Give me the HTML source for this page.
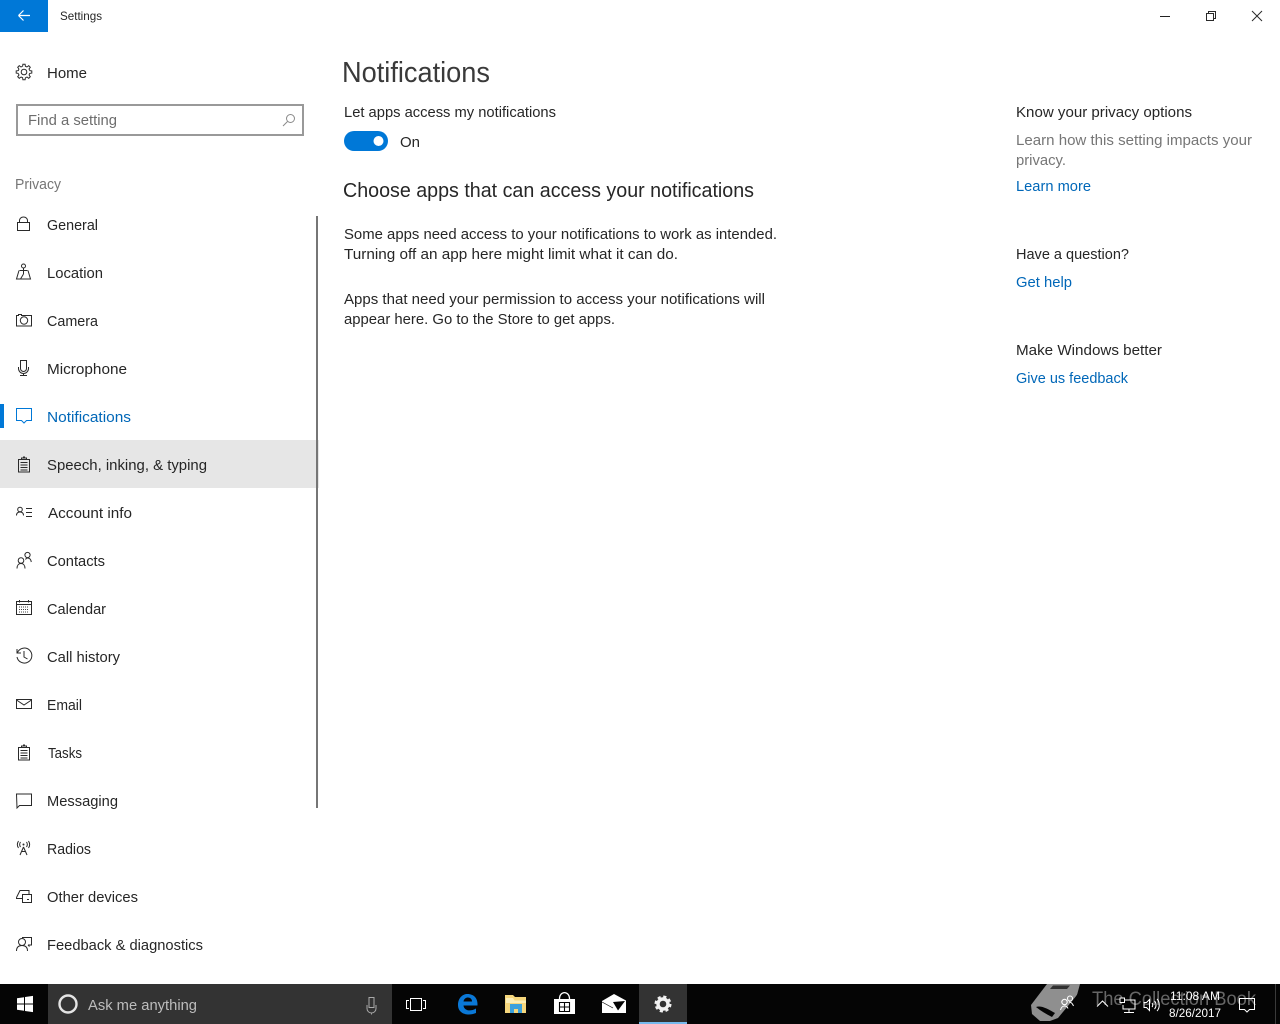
<!DOCTYPE html>
<html lang="en">
<head>
<meta charset="utf-8">
<title>Settings</title>
<style>
html,body{margin:0;padding:0;background:#fff;width:1280px;height:1024px;overflow:hidden}
svg{display:block}
text{font-family:"Liberation Sans",sans-serif;font-size:15px;fill:#262626}
.i{fill:none;stroke:#2a2a2a;stroke-width:1}
</style>
</head>
<body>
<svg width="1280" height="1024" viewBox="0 0 1280 1024" xmlns="http://www.w3.org/2000/svg">
<rect width="1280" height="1024" fill="#fff"/>
<!-- title bar -->
<rect width="48" height="32" fill="#0078d7"/>
<path d="M18.500 15.500H30M18.500 15.500l5-5M18.500 15.500l5 5" fill="none" stroke="#fff" stroke-width="1.200"/>
<text x="60" y="20" style="font-size:12px" textLength="42" lengthAdjust="spacingAndGlyphs">Settings</text>
<path d="M1160 16.500h10" stroke="#222" fill="none"/>
<path d="M1206.500 13.500h7v7h-7zM1208.500 13.500v-2h7v7h-2" class="i"/>
<path d="M1252 11l10 10M1262 11l-10 10" class="i"/>
<!-- sidebar top -->
<g transform="translate(24 72)" class="i" stroke-width="0.900">
<path d="M-1.400-5.700L-1.100-7.800H1.100L1.400-5.700L3.040-5.020"/>
<path transform="rotate(45)" d="M-1.400-5.700L-1.100-7.800H1.100L1.400-5.700L3.040-5.020"/>
<path transform="rotate(90)" d="M-1.400-5.700L-1.100-7.800H1.100L1.400-5.700L3.040-5.020"/>
<path transform="rotate(135)" d="M-1.400-5.700L-1.100-7.800H1.100L1.400-5.700L3.040-5.020"/>
<path transform="rotate(180)" d="M-1.400-5.700L-1.100-7.800H1.100L1.400-5.700L3.040-5.020"/>
<path transform="rotate(225)" d="M-1.400-5.700L-1.100-7.800H1.100L1.400-5.700L3.040-5.020"/>
<path transform="rotate(270)" d="M-1.400-5.700L-1.100-7.800H1.100L1.400-5.700L3.040-5.020"/>
<path transform="rotate(315)" d="M-1.400-5.700L-1.100-7.800H1.100L1.400-5.700L3.040-5.020"/>
<circle r="2.800"/>
</g>
<text x="47" y="78" textLength="40" lengthAdjust="spacingAndGlyphs">Home</text>
<rect x="17" y="105" width="286" height="30" fill="#fff" stroke="#999" stroke-width="2"/>
<text x="28" y="125" style="fill:#6d6d6d" textLength="89" lengthAdjust="spacingAndGlyphs">Find a setting</text>
<circle cx="290.500" cy="118.500" r="4" fill="none" stroke="#8a8a8a"/>
<path d="M287.500 121.500l-4.500 4.500" stroke="#8a8a8a" fill="none"/>
<text x="15" y="189" style="fill:#767676" textLength="46" lengthAdjust="spacingAndGlyphs">Privacy</text>
<!-- selection, scrollbar -->
<rect x="0" y="440" width="319" height="48" fill="#e6e6e6"/>
<rect x="316" y="216" width="2" height="592" fill="#767676"/>
<rect x="0" y="404" width="4" height="24" fill="#0078d7"/>
<!-- nav -->
<text x="47" y="230" textLength="51" lengthAdjust="spacingAndGlyphs">General</text>
<text x="47" y="278" textLength="56" lengthAdjust="spacingAndGlyphs">Location</text>
<text x="47" y="326" textLength="51" lengthAdjust="spacingAndGlyphs">Camera</text>
<text x="47" y="374" textLength="80" lengthAdjust="spacingAndGlyphs">Microphone</text>
<text x="47" y="422" style="fill:#0067b8" textLength="84" lengthAdjust="spacingAndGlyphs">Notifications</text>
<text x="47" y="470" textLength="160" lengthAdjust="spacingAndGlyphs">Speech, inking, &amp; typing</text>
<text x="48" y="518" textLength="84" lengthAdjust="spacingAndGlyphs">Account info</text>
<text x="47" y="566" textLength="58" lengthAdjust="spacingAndGlyphs">Contacts</text>
<text x="47" y="614" textLength="59" lengthAdjust="spacingAndGlyphs">Calendar</text>
<text x="47" y="662" textLength="73" lengthAdjust="spacingAndGlyphs">Call history</text>
<text x="47" y="710" textLength="35" lengthAdjust="spacingAndGlyphs">Email</text>
<text x="48" y="758" textLength="34" lengthAdjust="spacingAndGlyphs">Tasks</text>
<text x="47" y="806" textLength="71" lengthAdjust="spacingAndGlyphs">Messaging</text>
<text x="47" y="854" textLength="44" lengthAdjust="spacingAndGlyphs">Radios</text>
<text x="47" y="902" textLength="91" lengthAdjust="spacingAndGlyphs">Other devices</text>
<text x="47" y="950" textLength="156" lengthAdjust="spacingAndGlyphs">Feedback &amp; diagnostics</text>
<!-- nav icons -->
<path d="M17.500 222.500h12v8h-12zM19.500 222.500v-2a4 3.500 0 0 1 8 0v2" class="i"/>
<circle cx="23.500" cy="266" r="2" class="i"/>
<path d="M23.500 268v6M19.500 270.500h8M19 270.500l-2.500 8.500h14l-2.500-8.500M23.500 274l-3 5" class="i"/>
<path d="M16.500 315.500h2v-1h3v1h10v10.500h-15z" class="i"/>
<circle cx="24" cy="320.500" r="3.700" class="i"/>
<path d="M20.500 360.500h6v8a3 3 0 0 1-6 0z" class="i"/>
<path d="M18.500 367v1.500a5 5 0 0 0 10 0v-1.500M23.500 373.500v2M20 375.500h7" class="i"/>
<path d="M16.500 408.500h15v12h-5l-2.500 2.500-2.500-2.500h-5z" fill="none" stroke="#0078d7"/>
<path d="M18.500 459.500h11v12.500h-11zM21.500 459.500v-1.500h2v-1h1v1h2v1.500M20.500 462.500h7M20.500 465h7M20.500 467.500h7M20.500 470h7" class="i"/>
<circle cx="20" cy="509.500" r="2.300" class="i"/>
<path d="M16.500 515.500c0-2.500 1.500-3.500 3.500-3.500s3.500 1 3.500 3.500M26 508.500h6M26 512.500h6M26 516.500h6" class="i"/>
<circle cx="21" cy="560.500" r="2.800" class="i"/>
<circle cx="27.500" cy="555" r="2.600" class="i"/>
<path d="M17 568.500c0-3 1.500-5 4-5s4 2 4 5M25.500 559.500c.5-1 1-1.500 2-1.500 2.500 0 3.500 2 3.800 4" class="i"/>
<path d="M16.500 601.500h15v13h-15zM16.500 604.500h15M19.500 600v2.500M28.500 600v2.500" class="i"/>
<path d="M19 607h10M19 609.500h10M19 612h10" fill="none" stroke="#444" stroke-dasharray="1 1"/>
<path d="M17.500 652.500a7.500 7.500 0 1 1-.5 4.500M17 649v4h4M24 651v6l3.500 2" class="i"/>
<path d="M16.500 699.500h15v9h-15zM16.500 700l7.500 5 7.500-5" class="i"/>
<path d="M18.500 747.500h11v12.500h-11zM21.500 747.500v-1.500h2v-1h1v1h2v1.500M20.500 750.500h7M20.500 753h7M20.500 755.500h7M20.500 758h7" class="i"/>
<path d="M16.500 794h15v11.500h-12l-2.500 2.500z" class="i"/>
<path d="M23.500 847l-3.500 8M23.500 847l3.500 8M21.500 851.500h4" class="i"/>
<circle cx="23.500" cy="844.500" r="1" fill="#2a2a2a"/>
<path d="M20.500 842c-1 1.500-1 3.500 0 5M26.500 842c1 1.500 1 3.500 0 5M18.500 841c-1.500 2.500-1.500 5 0 7M28.500 841c1.500 2.500 1.500 5 0 7" class="i"/>
<path d="M16.500 897.500l3.500-7h9v3.500M16.500 897.500v1h6M22.500 894.500h9v8h-9zM27 899.500h2" class="i"/>
<circle cx="22" cy="942" r="3.500" class="i"/>
<path d="M16.500 951c0-3.500 2-5.500 5.500-5.500s5.500 2 5.500 5.500M22 937.500h9.500v7.500h-3.500M28 945l1.500 1.500" class="i"/>
<!-- content -->
<text x="342" y="82" style="font-size:29px;fill:#3a3a3a" textLength="148" lengthAdjust="spacingAndGlyphs">Notifications</text>
<text x="344" y="117" textLength="212" lengthAdjust="spacingAndGlyphs">Let apps access my notifications</text>
<rect x="344" y="131" width="44" height="20" rx="10" fill="#0078d7"/>
<circle cx="378.500" cy="141" r="5" fill="#fff"/>
<text x="400" y="147" textLength="20" lengthAdjust="spacingAndGlyphs">On</text>
<text x="343" y="197" style="font-size:20px" textLength="411" lengthAdjust="spacingAndGlyphs">Choose apps that can access your notifications</text>
<text x="344" y="239" textLength="433" lengthAdjust="spacingAndGlyphs">Some apps need access to your notifications to work as intended.</text>
<text x="344" y="259" textLength="334" lengthAdjust="spacingAndGlyphs">Turning off an app here might limit what it can do.</text>
<text x="344" y="304" textLength="421" lengthAdjust="spacingAndGlyphs">Apps that need your permission to access your notifications will</text>
<text x="344" y="324" textLength="271" lengthAdjust="spacingAndGlyphs">appear here. Go to the Store to get apps.</text>
<!-- right column -->
<text x="1016" y="117" textLength="176" lengthAdjust="spacingAndGlyphs">Know your privacy options</text>
<text x="1016" y="145" style="fill:#767676" textLength="236" lengthAdjust="spacingAndGlyphs">Learn how this setting impacts your</text>
<text x="1016" y="165" style="fill:#767676" textLength="50" lengthAdjust="spacingAndGlyphs">privacy.</text>
<text x="1016" y="191" style="fill:#0067b8" textLength="75" lengthAdjust="spacingAndGlyphs">Learn more</text>
<text x="1016" y="259" textLength="113" lengthAdjust="spacingAndGlyphs">Have a question?</text>
<text x="1016" y="287" style="fill:#0067b8" textLength="56" lengthAdjust="spacingAndGlyphs">Get help</text>
<text x="1016" y="355" textLength="146" lengthAdjust="spacingAndGlyphs">Make Windows better</text>
<text x="1016" y="383" style="fill:#0067b8" textLength="112" lengthAdjust="spacingAndGlyphs">Give us feedback</text>
<!-- taskbar -->
<rect x="0" y="984" width="1280" height="40" fill="#050505"/>
<rect x="48" y="984" width="344" height="40" fill="#333"/>
<rect x="639" y="984" width="48" height="40" fill="#333"/>
<rect x="639" y="1022" width="48" height="2" fill="#76b9ed"/>
<path d="M17 998.200l7-1v6.300h-7zM25 997l8-1.100v7.600h-8zM17 1004.500h7v6.300l-7-1zM25 1004.500h8v7.600l-8-1.100z" fill="#fff"/>
<circle cx="68" cy="1004" r="8.500" fill="none" stroke="#e4e4e4" stroke-width="2.400"/>
<text x="88" y="1010" style="fill:#bdbdbd" textLength="109" lengthAdjust="spacingAndGlyphs">Ask me anything</text>
<path d="M369 997.500h5v10h-5zM367 1005v3.500a4.500 4.500 0 0 0 9 0v-3.500M371.500 1013v1.500" fill="none" stroke="#aaa" stroke-width="1"/>
<path d="M410.500 998.500h11v12h-11zM409 1000.500h-2.500v8h2.500M423 1000.500h2.500v8H423" fill="none" stroke="#fff"/>
<!-- edge -->
<path d="M467.500 994c6.500 0 10.500 4.500 10 11.500h-14c.5 5 6.500 6.500 12.500 3v4.500c-8 3.500-18 1-18-8 0-7 4.500-11 9.500-11zm-4 7.500h8.500c0-5-7.500-5.500-8.500 0z" fill="#0a78d7" fill-rule="evenodd"/>
<!-- explorer -->
<path d="M505 995h8l2 2h11v16h-21z" fill="#f5d67c"/>
<path d="M506 998h7l1.500 2.500h11.500v2.500h-20z" fill="#fbeeb8"/>
<path d="M510 1013v-9h12v9h-4v-4h-4v4z" fill="#3aa0dc"/>
<!-- store -->
<path d="M554 999h21v15h-21z" fill="#fff"/>
<path d="M559.500 999c0-8.500 10-8.500 10 0" fill="none" stroke="#fff" stroke-width="1.300"/>
<path d="M559.500 1002.500h10v9h-10zM564.500 1002.500v9M559.500 1007h10" fill="none" stroke="#050505" stroke-width="1.100"/>
<!-- mail -->
<path d="M602 1001l12-7 12 6.500V1013h-24z" fill="#fff"/>
<path d="M613 1002l12-1-7 9.500z" fill="#050505"/>
<path d="M602 1002l11 6" fill="none" stroke="#050505" stroke-width=".7"/>
<!-- gear -->
<circle cx="663" cy="1004" r="7" fill="none" stroke="#f2f2f2" stroke-width="3" stroke-dasharray="3 2.500"/>
<circle cx="663" cy="1004" r="5" fill="none" stroke="#f2f2f2" stroke-width="3.400"/>
<!-- watermark -->
<path d="M1031 1005l16-21h33l-3 11-19 23-8 3h-10l-8-7z" fill="#8f8f8f"/>
<path d="M1036 1007c5-2 12 2 19 6l-3 4c-6-3-11-6-16-10z" fill="#050505"/>
<path d="M1053 985.500h17l-3 3.500h-17z" fill="#303030"/>
<path d="M1078 993l-2 7-13 15 12-17z" fill="#050505"/>
<text x="1092" y="1005" style="font-size:19px;fill:#666" textLength="164" lengthAdjust="spacingAndGlyphs">The Collection Book</text>
<!-- tray -->
<circle cx="1064.500" cy="1002" r="2.700" fill="none" stroke="#fff" stroke-width="1.100"/>
<circle cx="1070" cy="998.500" r="2.500" fill="none" stroke="#fff" stroke-width="1.100"/>
<path d="M1060.500 1010c.5-2 2-4 4-4s3 1 3.500 2.500M1069 1002c2 0 3.500 1.500 4.500 4" fill="none" stroke="#fff"/>
<path d="M1097 1006.500l5.500-5.500 5.500 5.500" fill="none" stroke="#fff"/>
<path d="M1123.500 1000h11.500v9h-12v-4M1129 1009v3M1124 1012.500h10" fill="none" stroke="#fff"/>
<rect x="1120" y="998" width="4.500" height="4.500" fill="#050505" stroke="#fff"/>
<path d="M1144 1002.500h2.500l3-3v11l-3-3H1144zM1152 1003c1 1 1 3 0 4M1154.500 1001c2 2 2 6 0 8M1157 999c3 3 3 9 0 12" fill="none" stroke="#fff"/>
<text x="1170" y="1000" style="font-size:12px;fill:#fff" textLength="50" lengthAdjust="spacingAndGlyphs">11:08 AM</text>
<text x="1169" y="1017" style="font-size:12px;fill:#fff" textLength="52" lengthAdjust="spacingAndGlyphs">8/26/2017</text>
<path d="M1239.500 998.500h15v11h-5l-2.500 2.500-2.500-2.500h-5z" fill="none" stroke="#fff"/>
<rect x="1275" y="984" width="1" height="40" fill="#3a3a3a"/>
</svg>
</body>
</html>
